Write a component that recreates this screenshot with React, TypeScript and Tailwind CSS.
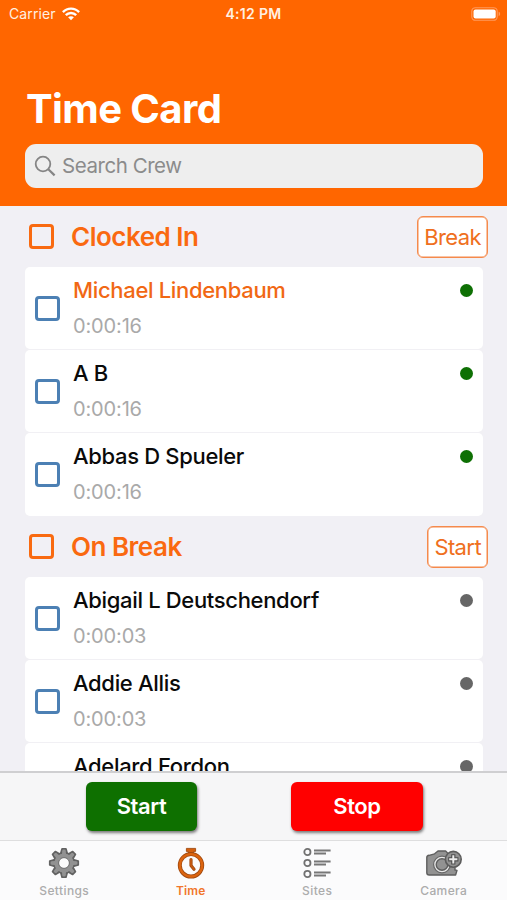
import React from "react";

type Member = { name: string; time: string; highlighted?: boolean };

const clockedIn: Member[] = [
  { name: "Michael Lindenbaum", time: "0:00:16", highlighted: true },
  { name: "A B", time: "0:00:16" },
  { name: "Abbas D Spueler", time: "0:00:16" },
];

const onBreak: Member[] = [
  { name: "Abigail L Deutschendorf", time: "0:00:03" },
  { name: "Addie Allis", time: "0:00:03" },
  { name: "Adelard Fordon", time: "0:00:03" },
];

function WifiIcon() {
  return (
    <svg width="18" height="14" viewBox="0 0 18 14" fill="none" stroke="#fff" strokeWidth="2.4">
      <path d="M0.9 5.1C5.4 0.4 12.6 0.4 17.1 5.1" />
      <path d="M3.8 8.2C6.7 5.3 11.3 5.3 14.2 8.2" />
      <path d="M6.1 10.3C7.7 8.8 10.3 8.8 11.9 10.3L9 13.3Z" fill="#fff" stroke="none" />
    </svg>
  );
}

function BatteryIcon() {
  return (
    <svg width="30" height="14" viewBox="0 0 30 14">
      <rect x="0.8" y="0.7" width="25.4" height="12.6" rx="3.6" fill="none" stroke="#ff9a5c" strokeWidth="1.1" />
      <rect x="2.5" y="2.4" width="22.2" height="9.2" rx="2" fill="#fff" />
      <path d="M27.6 4.8C29.6 5.4 29.6 8.6 27.6 9.2Z" fill="#ff9a5c" />
    </svg>
  );
}

function StatusBar() {
  return (
    <div className="grid h-[27px] grid-cols-3 items-center pl-[9px] pr-[6px] text-[14px] text-[#fff0e2]">
      <div className="flex items-center gap-[6px]">
        <span className="tracking-[0.1px]">Carrier</span>
        <WifiIcon />
      </div>
      <span className="pr-[3px] text-center font-semibold tracking-[0.3px]">4:12 PM</span>
      <div className="flex justify-end">
        <BatteryIcon />
      </div>
    </div>
  );
}

function SectionHeader({ title, action }: { title: string; action: string }) {
  return (
    <div className="flex h-[61px] items-center pl-[29px] pr-[19px]">
      <span className="size-[25px] rounded-[4px] border-[3px] border-[#f96a10]" />
      <h2 className="ml-[17px] flex-1 text-[26px] font-semibold leading-[32px] tracking-[-0.5px] text-[#fa6910]">{title}</h2>
      <button className="h-[42px] rounded-[6px] border border-[#f58a4c] bg-white px-[6px] text-[22px] leading-[38px] tracking-[-0.6px] text-[#ef6f20] shadow-[inset_0_0_0_0.5px_#f58a4c]">
        {action}
      </button>
    </div>
  );
}

function MemberRow({ member, dot }: { member: Member; dot: string }) {
  return (
    <li className="flex h-[83px] flex-none border-b border-[#f1f0f4] bg-[#f1f0f4] last:border-b-0">
      <div className="flex flex-1 rounded-[5px] bg-white px-[10px]">
        <span className="mt-[29px] size-[25px] rounded-[4px] border-[3px] border-[#4c80b4]" />
        <div className="ml-[13px] flex-1 pt-[8px]">
          <div className={`text-[22px] font-medium leading-[30px] tracking-[-0.33px] ${member.highlighted ? "text-[#f16814]" : "text-[#0a0a0a]"}`}>
            {member.name}
          </div>
          <div className="mt-[8px] text-[20px] leading-[26px] tracking-[-0.15px] text-[#a9a9a9]">{member.time}</div>
        </div>
        <span className={`mt-[17px] size-[13px] rounded-full ${dot}`} />
      </div>
    </li>
  );
}

function GearIcon() {
  const teeth = [0, 45, 90, 135, 180, 225, 270, 315];
  return (
    <svg width="32" height="32" viewBox="0 0 32 32">
      <g fill="#929292" stroke="#626262" strokeWidth="1.8" strokeLinejoin="round">
        {teeth.map((a) => (
          <path key={a} d="M12.7 7L14.1 1.8H17.9L19.3 7Z" transform={`rotate(${a} 16 16)`} />
        ))}
        <circle cx="16" cy="16" r="10" />
      </g>
      <circle cx="16" cy="16" r="9.6" fill="#929292" />
      {teeth.map((a) => (
        <path key={a} d="M13.6 8L14.8 2.8H17.2L18.4 8Z" fill="#929292" transform={`rotate(${a} 16 16)`} />
      ))}
      <circle cx="16" cy="16" r="5.4" fill="#fbfbfb" stroke="#6a6a6a" strokeWidth="1" />
    </svg>
  );
}

function StopwatchIcon() {
  return (
    <svg width="28" height="32" viewBox="0 0 28 32">
      <path d="M9.4 1.4H18.6V4.4H16.6V7H11.4V4.4H9.4Z" fill="#d4600e" stroke="#a14a10" strokeWidth="0.9" />
      <circle cx="14" cy="18.3" r="11.2" fill="none" stroke="#a14a10" strokeWidth="4" />
      <circle cx="14" cy="18.3" r="11.2" fill="none" stroke="#dc640f" strokeWidth="2.3" />
      <path d="M14 12.5V18.5L17 22.2" fill="none" stroke="#a14a10" strokeWidth="3.2" strokeLinecap="round" strokeLinejoin="round" />
      <path d="M14 12.5V18.5L17 22.2" fill="none" stroke="#c85a10" strokeWidth="1.6" strokeLinecap="round" />
    </svg>
  );
}

function ListIcon() {
  return (
    <svg width="30" height="32" viewBox="0 0 30 32" fill="none">
      {[5, 16, 27].map((y) => (
        <g key={y}>
          <circle cx="5.4" cy={y} r="3.1" stroke="#717171" strokeWidth="1.8" />
          <path d={`M12 ${y - 1.5}H28.6M12 ${y + 1.5}H24`} stroke="#777" strokeWidth="2" />
        </g>
      ))}
    </svg>
  );
}

function CameraIcon() {
  return (
    <svg width="38" height="30" viewBox="0 0 38 30">
      <path
        d="M4.2 7.3L9.6 5.8L13 3H20.6L23.5 6H30V22L32 22.4L30.6 27H4.2Q1.8 27 1.8 24.4V9.6Q1.8 7.6 4.2 7.3Z"
        fill="#929292"
        stroke="#5e5e5e"
        strokeWidth="1.4"
        strokeLinejoin="round"
      />
      <circle cx="17" cy="16.5" r="8.4" fill="#e7e7e7" stroke="#666" strokeWidth="1.2" />
      <circle cx="17" cy="16.5" r="5.8" fill="#929292" stroke="#5e5e5e" strokeWidth="1.4" />
      <circle cx="28.3" cy="11.3" r="7.9" fill="#929292" stroke="#5c5c5c" strokeWidth="1.6" />
      <path d="M28.3 6.2V16.4M23.2 11.3H33.4" stroke="#4f4f4f" strokeWidth="4.2" />
      <path d="M28.3 7.2V15.4M24.2 11.3H32.4" stroke="#ededed" strokeWidth="2" />
    </svg>
  );
}

function Tab({ label, active, children }: { label: string; active?: boolean; children: React.ReactNode }) {
  return (
    <button className="flex flex-1 flex-col items-center pt-[5px]">
      <span className="flex h-[34px] items-center justify-center">{children}</span>
      <span className={`mt-[3px] text-[12px] leading-[16px] ${active ? "font-semibold tracking-[0.1px] text-[#f1762d]" : "font-medium tracking-[0.4px] text-[#acacac]"}`}>
        {label}
      </span>
    </button>
  );
}

export default function App() {
  return (
    <div className="flex h-[900px] w-[507px] flex-col overflow-hidden bg-[#f1f0f5] font-['Inter',sans-serif]">
      <header className="h-[206px] flex-none bg-[#ff6600]">
        <StatusBar />
        <h1 className="mt-[58px] pl-[26px] text-[40px] font-bold leading-[48px] tracking-[-0.6px] text-white">Time Card</h1>
        <div className="ml-[25px] mr-[24px] mt-[11px] flex h-[44px] items-center rounded-[11px] bg-[#eeeeee] pl-[9px] text-[#8b8b8b]">
          <svg width="22" height="22" viewBox="0 0 22 22" fill="none" stroke="#858585" strokeWidth="1.8">
            <circle cx="9" cy="9" r="7.3" />
            <path d="M14.3 14.3L20.6 20.4" strokeWidth="2.2" />
          </svg>
          <span className="ml-[6px] pt-px text-[20.5px] tracking-[-0.45px]">Search Crew</span>
        </div>
      </header>

      <main className="min-h-0 flex-1 overflow-hidden">
        <SectionHeader title="Clocked In" action="Break" />
        <ul className="ml-[25px] mr-[24px]">
          {clockedIn.map((m) => (
            <MemberRow key={m.name} member={m} dot="bg-[#0e7004]" />
          ))}
        </ul>
        <SectionHeader title="On Break" action="Start" />
        <ul className="ml-[25px] mr-[24px]">
          {onBreak.map((m) => (
            <MemberRow key={m.name} member={m} dot="bg-[#666666]" />
          ))}
        </ul>
      </main>

      <footer className="flex-none">
        <div className="flex h-[69px] border-t-2 border-[#cfcfd1] bg-[#f6f6f7] pl-[86px] pt-[9px] text-[22px] font-semibold tracking-[-0.4px] text-white">
          <button className="h-[49px] w-[111px] rounded-[6px] bg-[#0e7000] shadow-[1px_2px_3px_rgba(0,0,0,0.5)]">Start</button>
          <button className="ml-[94px] h-[49px] w-[132px] rounded-[6px] bg-[#ff0000] shadow-[1px_2px_3px_rgba(0,0,0,0.5)]">Stop</button>
        </div>
        <nav className="flex h-[60px] border-t border-[#dededf] bg-[#fbfbfc] pl-px">
          <Tab label="Settings"><GearIcon /></Tab>
          <Tab label="Time" active><StopwatchIcon /></Tab>
          <Tab label="Sites"><ListIcon /></Tab>
          <Tab label="Camera"><CameraIcon /></Tab>
        </nav>
      </footer>
    </div>
  );
}
